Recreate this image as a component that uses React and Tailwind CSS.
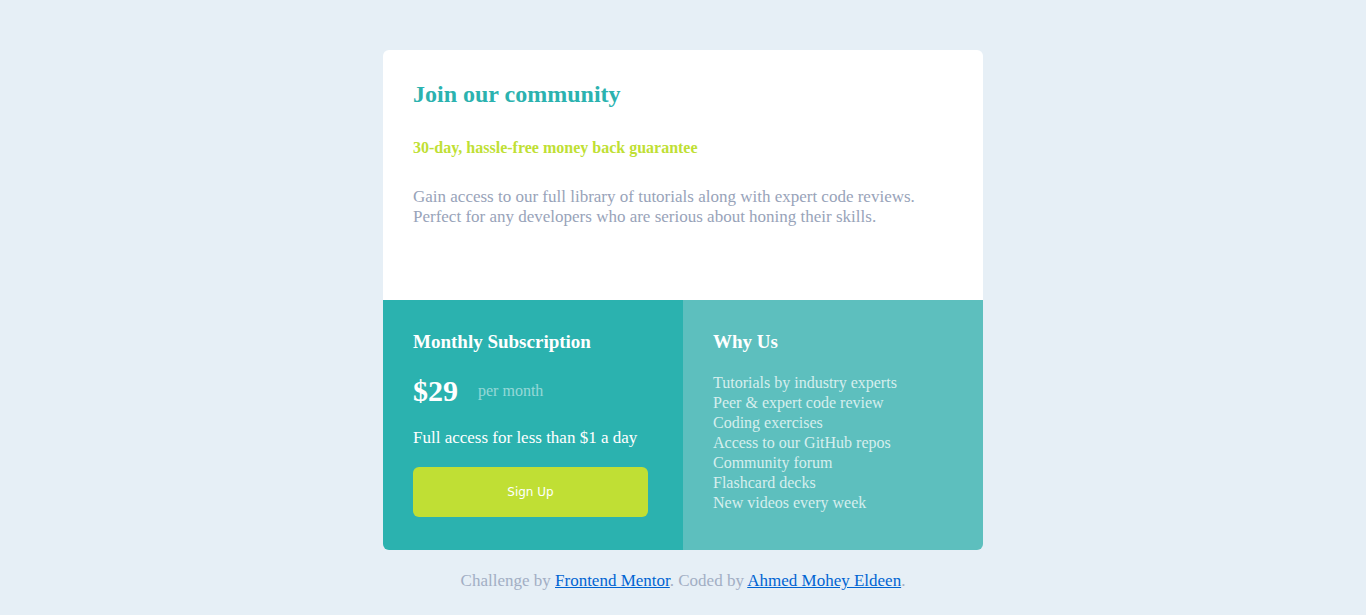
import React from 'react';

const features = [
  'Tutorials by industry experts',
  'Peer & expert code review',
  'Coding exercises',
  'Access to our GitHub repos',
  'Community forum',
  'Flashcard decks',
  'New videos every week',
];

const App = () => {
  return (
    <div className="min-h-screen bg-[#e6eff6] flex flex-col items-center pt-[50px] font-['Liberation_Serif',serif]">
      <div className="w-[600px] rounded-md overflow-hidden">
        {/* Top */}
        <div className="bg-white h-[250px] px-[30px] pt-[30px]">
          <h1 className="text-[24px] font-bold text-[#2bb2af] leading-[28px]">Join our community</h1>
          <h2 className="mt-[30px] text-[16px] font-bold text-[#c0df34] leading-[19px]">
            30-day, hassle-free money back guarantee
          </h2>
          <p className="mt-[30px] text-[17px] leading-[20px] text-[#98a3b9]">
            Gain access to our full library of tutorials along with expert code reviews.
            <br />
            Perfect for any developers who are serious about honing their skills.
          </p>
        </div>

        {/* Bottom */}
        <div className="grid grid-cols-2 h-[250px]">
          <div className="bg-[#2bb2af] px-[30px] pt-[30px] text-white">
            <h3 className="text-[19px] font-bold leading-[23px]">Monthly Subscription</h3>
            <div className="flex items-center mt-[20px]">
              <span className="text-[30px] font-bold leading-[35px]">$29</span>
              <span className="ml-[20px] text-[16px] text-white/50">per month</span>
            </div>
            <p className="mt-[20px] text-[17px] leading-[20px]">Full access for less than $1 a day</p>
            <button className="mt-[19px] w-[235px] h-[50px] rounded-md bg-[#c0df34] text-white text-[12px] font-['DejaVu_Sans',sans-serif]">
              Sign Up
            </button>
          </div>
          <div className="bg-[#5dbfbe] px-[30px] pt-[30px] text-white">
            <h3 className="text-[19px] font-bold leading-[23px]">Why Us</h3>
            <ul className="mt-[20px] text-[16px] leading-[20px] text-white/75">
              {features.map((f) => (
                <li key={f}>{f}</li>
              ))}
            </ul>
          </div>
        </div>
      </div>

      <p className="mt-[18px] text-[17px] text-[#a2aec4]">
        Challenge by <a href="#" className="text-[#0064d2] underline">Frontend Mentor</a>. Coded by{' '}
        <a href="#" className="text-[#0064d2] underline">Ahmed Mohey Eldeen</a>.
      </p>
    </div>
  );
};

export default App;
